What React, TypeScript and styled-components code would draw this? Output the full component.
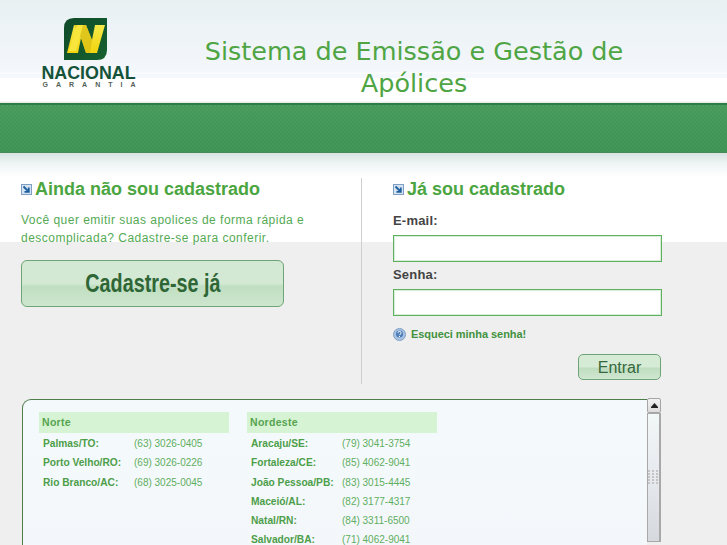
import styled, { createGlobalStyle } from "styled-components";

const GlobalStyle = createGlobalStyle`
  html, body {
    margin: 0;
    padding: 0;
    height: 545px;
    overflow: hidden;
    background: #efefef;
  }
`;

const Page = styled.div`
  width: 727px;
  height: 545px;
  overflow: hidden;
  font-family: "Liberation Sans", Arial, sans-serif;
`;

const Header = styled.header`
  height: 103px;
  display: flex;
  box-sizing: border-box;
  background: linear-gradient(to bottom, #e8f0f2 0, #f4f7fb 72px, #fdfeff 73px, #f4f7fb 74px, #f4f7fb 78px, #ffffff 78px, #ffffff 101px, #dfe5df 103px);
`;

const LogoBox = styled.div`
  width: 94px;
  margin: 18px 0 0 42px;
  display: flex;
  flex-direction: column;
  align-items: center;
`;

const LogoMarkFrame = styled.div`
  height: 43px;
  margin-right: 7px;
`;

const LogoName = styled.div`
  font-weight: 700;
  font-size: 18.4px;
  line-height: 14px;
  margin-top: 5px;
  color: #14533a;
  white-space: nowrap;
  transform: scaleX(0.97);
`;

const LogoSub = styled.div`
  font-weight: 700;
  font-size: 7px;
  line-height: 7px;
  margin-top: 1px;
  color: #555f58;
  letter-spacing: 8px;
  margin-right: -8px;
  white-space: nowrap;
`;

const Title = styled.h1`
  width: 480px;
  margin: 35px 0 0 38px;
  font-family: "DejaVu Sans", Verdana, sans-serif;
  font-weight: 400;
  font-size: 25.5px;
  line-height: 32px;
  color: #4fa544;
  text-align: center;
`;

const Band = styled.div`
  height: 50px;
  box-sizing: border-box;
  border-top: 2px solid #2f7d46;
  border-bottom: 1px solid #47875a;
  background-color: #409756;
  background-image:
    repeating-conic-gradient(rgba(255, 255, 255, 0.035) 0 25%, transparent 0 50%),
    linear-gradient(to bottom, #44995a 0, #3d9353 100%);
  background-size: 4px 4px, 100% 100%;
`;

const Main = styled.main`
  padding: 25px 0 0 21px;
  height: 392px;
  box-sizing: border-box;
  background: linear-gradient(to bottom, #d5e3e1 0, #eef4f4 10px, #ffffff 24px, #ffffff 89px, #efefef 89px);
`;

const Columns = styled.div`
  display: flex;
  height: 206px;
`;

const LeftCol = styled.section`
  width: 340px;
  border-right: 1px solid #cfcfcf;
`;

const RightCol = styled.section`
  margin-left: 31px;
  width: 269px;
  display: flex;
  flex-direction: column;
`;

const Heading = styled.h2`
  margin: 0;
  display: flex;
  align-items: center;
  gap: 3px;
  font-size: 18px;
  line-height: 22px;
  font-weight: 700;
  color: #4ba541;
`;

const Intro = styled.p`
  margin: 11px 0 0;
  width: 300px;
  font-size: 12px;
  line-height: 18px;
  letter-spacing: 0.48px;
  color: #55aa55;
`;

const SignupButton = styled.button`
  display: flex;
  align-items: center;
  justify-content: center;
  margin-top: 13px;
  width: 263px;
  height: 47px;
  padding: 0;
  box-sizing: border-box;
  border: 1px solid #6fa477;
  border-radius: 6px;
  background: linear-gradient(to bottom, #d3e9d4 0, #d3e9d4 50%, #c0dec1 56%, #cde6ce 100%);
`;

const SignupLabel = styled.span`
  font-family: "Liberation Sans", Arial, sans-serif;
  font-weight: 700;
  font-size: 26px;
  color: #2f6636;
  transform: scaleX(0.76);
  white-space: nowrap;
`;

const FieldLabel = styled.label<{ $first?: boolean }>`
  margin-top: ${(p) => (p.$first ? "12px" : "4px")};
  font-size: 13px;
  line-height: 18px;
  font-weight: 700;
  letter-spacing: 0.2px;
  color: #444444;
`;

const Input = styled.input`
  display: block;
  margin-top: 5px;
  height: 27px;
  width: 269px;
  box-sizing: border-box;
  border: 1px solid #5fb05f;
  border-radius: 0;
  box-shadow: inset 0 0 0 1px #d8eed8;
  appearance: none;
  background: #ffffff;
  padding: 0 4px;
  outline: none;
`;

const Forgot = styled.a`
  margin-top: 9px;
  display: flex;
  align-items: center;
  gap: 5px;
  height: 18px;
  font-size: 11px;
  font-weight: 700;
  letter-spacing: -0.05px;
  color: #43923f;
`;

const SubmitRow = styled.div`
  display: flex;
  justify-content: flex-end;
  margin-top: 11px;
  padding-right: 1px;
`;

const SubmitButton = styled.button`
  width: 83px;
  height: 26px;
  padding: 2px 0 0;
  box-sizing: border-box;
  border: 1px solid #6fa477;
  border-radius: 5px;
  font-family: "Liberation Sans", Arial, sans-serif;
  font-size: 16px;
  line-height: 22px;
  color: #35683c;
  background: linear-gradient(to bottom, #d6ebd6 0, #d6ebd6 48%, #bfddc0 56%, #d0e7d0 100%);
`;

const ContactsRow = styled.div`
  display: flex;
  margin: 15px 0 0 1px;
  height: 200px;
`;

const ContactsPanel = styled.div`
  width: 625px;
  box-sizing: border-box;
  padding: 12px 0 0 16px;
  display: flex;
  gap: 18px;
  align-items: flex-start;
  border-top: 1px solid #4f7d4a;
  border-left: 1px solid #4f7d4a;
  border-top-left-radius: 9px;
  background: linear-gradient(to bottom, #f4fafc 0, #f3f6fa 200px);
`;

const Region = styled.div`
  width: 190px;
`;

const RegionName = styled.div`
  height: 21px;
  padding-left: 3px;
  margin-bottom: 1.2px;
  font-size: 10.5px;
  line-height: 21px;
  font-weight: 700;
  letter-spacing: 0.3px;
  color: #55a34f;
  background: #d6f3d3;
`;

const ContactRow = styled.div`
  display: flex;
  height: 19.2px;
  padding-left: 4px;
  font-size: 10px;
  line-height: 19.2px;
  color: #5fae5f;
`;

const City = styled.span`
  width: 91px;
  font-size: 10.2px;
  font-weight: 700;
  color: #4d9e49;
  white-space: nowrap;
`;

const Scrollbar = styled.div`
  width: 14px;
  height: 200px;
  margin-top: -1px;
  display: flex;
  flex-direction: column;
`;

const ScrollButton = styled.div`
  height: 15px;
  box-sizing: border-box;
  border: 1px solid #a5a5a5;
  border-radius: 2px;
  background: linear-gradient(to bottom, #f2f2f2, #dcdcdc);
  display: flex;
  align-items: center;
  justify-content: center;
`;

const ScrollThumb = styled.div`
  height: 129px;
  box-sizing: border-box;
  border: 1px solid #a8a8a8;
  border-width: 1px 2px 1px 1px;
  background: linear-gradient(to bottom, #f2f7f7 0, #e6e9ee 50%, #d5d8dc 100%);
  display: flex;
  align-items: center;
  justify-content: center;
`;

function Bullet() {
  return (
    <svg width="11" height="11" viewBox="0 0 11 11">
      <rect x="0.5" y="0.5" width="10" height="10" fill="#d5e2f0" stroke="#7f9fc4" />
      <path d="M2.5 2.5 L7 7 M7.8 3.5 V7.8 H3.5" stroke="#1f5fa0" strokeWidth="1.8" fill="none" />
    </svg>
  );
}

function HelpIcon() {
  return (
    <svg width="13" height="13" viewBox="0 0 13 13">
      <circle cx="6.5" cy="6.5" r="6" fill="#a9c3e3" stroke="#7f9fc4" />
      <circle cx="6.5" cy="6" r="3.6" fill="#4f7fb8" />
      <path d="M5 4.8 a1.5 1.5 0 1 1 2 1.5 l-.5 .8" stroke="#fff" strokeWidth="1" fill="none" />
      <rect x="6" y="8" width="1" height="1" fill="#fff" />
    </svg>
  );
}

function LogoMark() {
  return (
    <svg width="43" height="43" viewBox="0 0 43 43">
      <defs>
        <linearGradient id="logoBack" x1="0" y1="0" x2="1" y2="1">
          <stop offset="0" stopColor="#0f4a2a" />
          <stop offset="1" stopColor="#16612f" />
        </linearGradient>
        <linearGradient id="logoYellow" x1="0" y1="0" x2="0" y2="1">
          <stop offset="0" stopColor="#f6e84a" />
          <stop offset="1" stopColor="#f2d40e" />
        </linearGradient>
      </defs>
      <path d="M10 0 H43 V32 Q43 42 33 42 H0 V10 Q0 0 10 0 Z" fill="url(#logoBack)" />
      <path d="M10 7 H22 L28 22 L31 7 H41 L33 35 H22 L17 20 L14 35 H3 Z" fill="url(#logoYellow)" />
      <path d="M10 7 H22 L28 22 L26 35 H22 L17 20 Z" fill="#d8bd14" opacity="0.75" />
      <path d="M13 7 H19 L12 33 H5 Z" fill="#f8e63c" />
    </svg>
  );
}

function Grip() {
  return (
    <svg width="11" height="16" viewBox="0 0 11 16">
      {[0, 3, 6, 9, 12].map((y) =>
        [0, 4, 8].map((x) => <rect key={`${x}-${y}`} x={x} y={y} width="2" height="2" fill="#c4c4c4" />)
      )}
    </svg>
  );
}

const norte = [
  ["Palmas/TO:", "(63) 3026-0405"],
  ["Porto Velho/RO:", "(69) 3026-0226"],
  ["Rio Branco/AC:", "(68) 3025-0045"],
];

const nordeste = [
  ["Aracaju/SE:", "(79) 3041-3754"],
  ["Fortaleza/CE:", "(85) 4062-9041"],
  ["João Pessoa/PB:", "(83) 3015-4445"],
  ["Maceió/AL:", "(82) 3177-4317"],
  ["Natal/RN:", "(84) 3311-6500"],
  ["Salvador/BA:", "(71) 4062-9041"],
];

export default function App() {
  return (
    <Page>
      <GlobalStyle />
      <Header>
        <LogoBox>
          <LogoMarkFrame>
            <LogoMark />
          </LogoMarkFrame>
          <LogoName>NACIONAL</LogoName>
          <LogoSub>GARANTIA</LogoSub>
        </LogoBox>
        <Title>Sistema de Emissão e Gestão de Apólices</Title>
      </Header>
      <Band />
      <Main>
        <Columns>
          <LeftCol>
            <Heading>
              <Bullet />
              Ainda não sou cadastrado
            </Heading>
            <Intro>Você quer emitir suas apolices de forma rápida e descomplicada? Cadastre-se para conferir.</Intro>
            <SignupButton>
              <SignupLabel>Cadastre-se já</SignupLabel>
            </SignupButton>
          </LeftCol>
          <RightCol>
            <Heading>
              <Bullet />
              Já sou cadastrado
            </Heading>
            <FieldLabel $first>E-mail:</FieldLabel>
            <Input type="text" />
            <FieldLabel>Senha:</FieldLabel>
            <Input type="password" />
            <Forgot>
              <HelpIcon />
              Esqueci minha senha!
            </Forgot>
            <SubmitRow>
              <SubmitButton>Entrar</SubmitButton>
            </SubmitRow>
          </RightCol>
        </Columns>
        <ContactsRow>
          <ContactsPanel>
            <Region>
              <RegionName>Norte</RegionName>
              {norte.map(([city, phone]) => (
                <ContactRow key={city}>
                  <City>{city}</City>
                  {phone}
                </ContactRow>
              ))}
            </Region>
            <Region>
              <RegionName>Nordeste</RegionName>
              {nordeste.map(([city, phone]) => (
                <ContactRow key={city}>
                  <City>{city}</City>
                  {phone}
                </ContactRow>
              ))}
            </Region>
          </ContactsPanel>
          <Scrollbar>
            <ScrollButton>
              <svg width="7" height="5" viewBox="0 0 7 5">
                <path d="M3.5 0 L7 4 V5 H0 V4 Z" fill="#222" />
              </svg>
            </ScrollButton>
            <ScrollThumb>
              <Grip />
            </ScrollThumb>
          </Scrollbar>
        </ContactsRow>
      </Main>
    </Page>
  );
}
